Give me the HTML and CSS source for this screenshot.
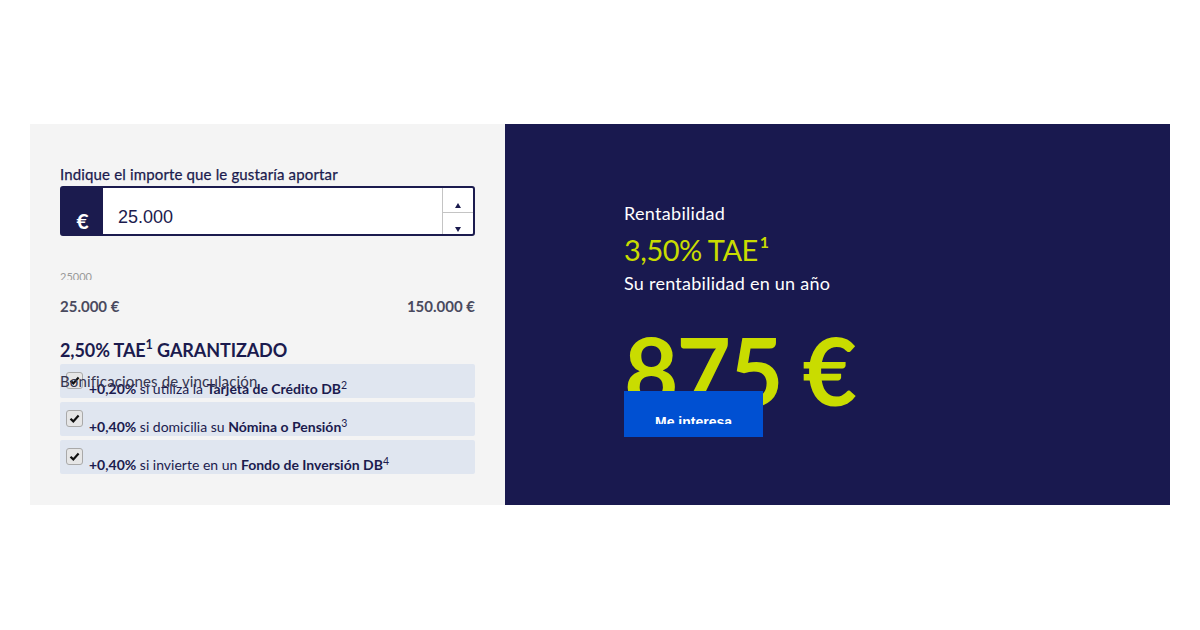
FILE: index.html
```html
<!DOCTYPE html>
<html lang="es">
<head>
<meta charset="utf-8">
<link rel="stylesheet" href="styles.css">
</head>
<body>
<div class="calc">
  <div class="left">
    <div class="label">Indique el importe que le gustaría aportar</div>
    <div class="input">
      <div class="euro">€</div>
      <div class="value">25.000</div>
      <div class="spin">
        <div class="half"><span class="up"></span></div>
        <div class="half"><span class="down"></span></div>
      </div>
    </div>
    <div class="range"><span>25000</span></div>
    <div class="limits"><span>25.000 €</span><span>150.000 €</span></div>
    <div class="heading">2,50% TAE<sup>1</sup> GARANTIZADO</div>
    <div class="rows">
      <div class="bonif">Bonificaciones de vinculación</div>
      <div class="row"><span class="cb"><svg viewBox="0 0 17 17" width="17" height="17"><path d="M4.5 8.8 L7.3 11.4 L12.6 5.6" fill="none" stroke="#111" stroke-width="2.2"/></svg></span><span class="txt"><b>+0,20%</b> si utiliza la <b>Tarjeta de Crédito DB</b><sup>2</sup></span></div>
      <div class="row"><span class="cb"><svg viewBox="0 0 17 17" width="17" height="17"><path d="M4.5 8.8 L7.3 11.4 L12.6 5.6" fill="none" stroke="#111" stroke-width="2.2"/></svg></span><span class="txt"><b>+0,40%</b> si domicilia su <b>Nómina o Pensión</b><sup>3</sup></span></div>
      <div class="row"><span class="cb"><svg viewBox="0 0 17 17" width="17" height="17"><path d="M4.5 8.8 L7.3 11.4 L12.6 5.6" fill="none" stroke="#111" stroke-width="2.2"/></svg></span><span class="txt"><b>+0,40%</b> si invierte en un <b>Fondo de Inversión DB</b><sup>4</sup></span></div>
    </div>
  </div>
  <div class="right">
    <div class="r-title">Rentabilidad</div>
    <div class="r-rate">3,50% TAE<sup>1</sup></div>
    <div class="r-sub">Su rentabilidad en un año</div>
    <div class="r-amount">875 €</div>
    <div class="btn"><div class="btn-in">Me interesa</div></div>
  </div>
</div>
</body>
</html>
```

FILE: styles.css
```css
html, body {
  margin: 0;
  padding: 0;
  background: #ffffff;
}
body {
  font-family: "Lato", "Liberation Sans", sans-serif;
}
.calc {
  display: flex;
  margin: 124px 30px 0;
  height: 381px;
}
.left {
  width: 475px;
  box-sizing: border-box;
  padding: 40px 30px 0;
  background: #f4f4f4;
  color: #1b1b4e;
}
.label {
  font-size: 15px;
  line-height: 20px;
  font-weight: 400;
  letter-spacing: 0.15px;
  margin-bottom: 2px;
  -webkit-text-stroke: 0.25px #1b1b4e;
}
.input {
  display: flex;
  height: 50px;
  box-sizing: border-box;
  border: 2px solid #1b1b4e;
  border-radius: 3px;
  background: #fff;
}
.euro {
  width: 41px;
  background: #1b1b4e;
  color: #fff;
  font-weight: 700;
  font-size: 21px;
  display: flex;
  align-items: flex-end;
  justify-content: center;
  padding-bottom: 1px;
  box-sizing: border-box;
}
.value {
  flex: 1;
  display: flex;
  align-items: center;
  padding: 12px 0 0 15px;
  font-family: "Liberation Sans", Arial, sans-serif;
  font-size: 18px;
  color: #1b1b4e;
}
.spin {
  width: 30px;
  border-left: 1px solid #c4c4c4;
  display: flex;
  flex-direction: column;
}
.half {
  flex: 1;
  display: flex;
  align-items: flex-end;
  justify-content: center;
  padding-bottom: 4px;
}
.half + .half {
  border-top: 1px solid #c4c4c4;
  padding-bottom: 2px;
}
.up, .down {
  width: 0;
  height: 0;
  border-left: 3px solid transparent;
  border-right: 3px solid transparent;
}
.up { border-bottom: 5px solid #1b1b4e; }
.down { border-top: 5px solid #1b1b4e; }
.range {
  height: 44px;
  overflow: hidden;
  box-sizing: border-box;
  padding-top: 34px;
  font-size: 11px;
  line-height: 14px;
  color: #9a9a9a;
}
.limits {
  display: flex;
  justify-content: space-between;
  margin-top: 16px;
  font-size: 15px;
  line-height: 20px;
  font-weight: 700;
  color: #4a4a5e;
}
.heading {
  margin-top: 22px;
  font-size: 18px;
  line-height: 24px;
  font-weight: 700;
  letter-spacing: -0.1px;
  color: #1b1b4e;
}
sup {
  font-size: 0.75em;
  line-height: 0;
  vertical-align: 0.5em;
}
.heading sup {
  font-size: 0.7em;
  vertical-align: 0.6em;
}
.rows {
  position: relative;
  margin-top: 2px;
  display: flex;
  flex-direction: column;
  gap: 4px;
}
.bonif {
  position: absolute;
  left: 0;
  top: 7px;
  font-size: 15px;
  line-height: 20px;
  letter-spacing: 0.15px;
  color: #35354f;
}
.row {
  display: flex;
  height: 34px;
  padding: 0 6px;
  background: #e0e6f0;
  border-radius: 2px;
}
.cb {
  width: 17px;
  height: 17px;
  margin-top: 8px;
  box-sizing: border-box;
  border: 1px solid #a9a9a9;
  border-radius: 3px;
  background: #e6e6e6;
  display: flex;
}
.cb svg {
  margin: -1px;
}
.txt {
  align-self: flex-end;
  margin-left: 6px;
  font-size: 14px;
  line-height: 18px;
  color: #1b1b4e;
}
.txt b {
  font-weight: 700;
}
.right {
  flex: 1;
  background: #19194f;
  padding: 78px 0 0 119px;
  color: #fff;
}
.r-title {
  font-size: 18px;
  line-height: 22px;
  letter-spacing: 0.3px;
}
.r-rate {
  margin-top: 9px;
  font-size: 29px;
  line-height: 34px;
  color: #c9dc00;
  letter-spacing: -0.5px;
}
.r-rate sup {
  font-size: 0.55em;
  font-weight: 700;
  vertical-align: 0.8em;
  margin-left: 2px;
}
.r-sub {
  margin-top: 5px;
  font-size: 18px;
  line-height: 22px;
  letter-spacing: 0.25px;
}
.r-amount {
  margin-top: 29px;
  font-size: 94px;
  line-height: 94px;
  font-weight: 700;
  letter-spacing: -2px;
  color: #c9dc00;
  white-space: nowrap;
}
.btn {
  margin-top: -26px;
  position: relative;
  width: 139px;
  height: 46px;
  box-sizing: border-box;
  padding-top: 21px;
  background: #0050d2;
  text-align: center;
}
.btn-in {
  height: 12px;
  overflow: hidden;
  font-family: "Liberation Sans", Arial, sans-serif;
  font-weight: 700;
  font-size: 14px;
  line-height: 20px;
  color: #fff;
}
```
